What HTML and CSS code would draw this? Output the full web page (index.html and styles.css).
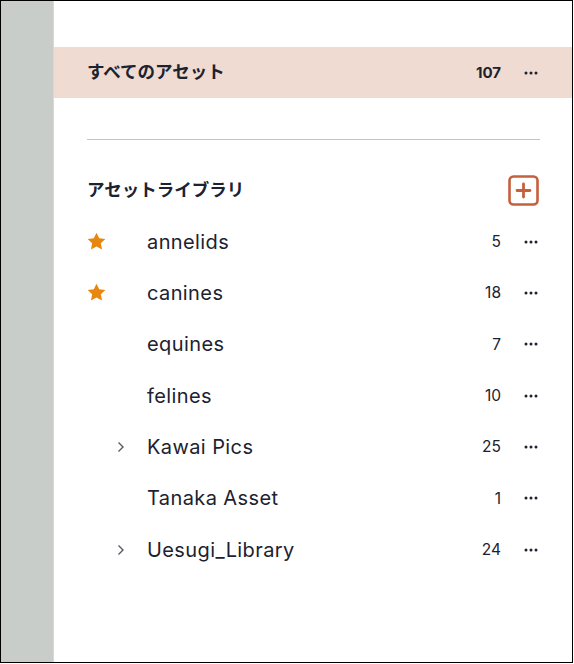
FILE: index.html
```html
<!DOCTYPE html>
<html lang="ja">
<head>
  <meta charset="UTF-8">
  <meta name="viewport" content="width=device-width, initial-scale=1.0">
  <title>アセット</title>
  <link rel="stylesheet" href="styles.css">
</head>
<body>
  <div class="frame">
    <div class="rail"></div>

    <div class="panel">
      <div class="all-row">
        <span class="all-name">すべてのアセット</span>
        <span class="all-count">107</span>
        <span class="dots"><svg width="14" height="4" viewBox="0 0 14 4"><circle cx="2" cy="2" r="1.5"/><circle cx="7" cy="2" r="1.5"/><circle cx="12" cy="2" r="1.5"/></svg></span>
      </div>

      <hr class="divider">

      <div class="section-head">
        <span class="section-title">アセットライブラリ</span>
        <button class="add-btn" aria-label="追加">
          <svg width="31" height="31" viewBox="0 0 31 31"><rect x="1.5" y="1.5" width="28" height="28" rx="4" fill="none" stroke="#c5603d" stroke-width="2.6"/><path d="M15.5 9v13M9 15.5h13" stroke="#c5603d" stroke-width="2.8" stroke-linecap="round"/></svg>
        </button>
      </div>

      <ul class="libs">
        <li class="lib">
          <span class="lead"><svg class="star" width="19" height="19" viewBox="0 0 24 24"><path d="M12 0.8l3.4 7.1 7.8 1-5.7 5.4 1.5 7.7L12 18.2l-7 3.8 1.5-7.7-5.7-5.4 7.8-1z"/></svg></span>
          <span class="name">annelids</span>
          <span class="count">5</span>
          <span class="dots"><svg width="14" height="4" viewBox="0 0 14 4"><circle cx="2" cy="2" r="1.5"/><circle cx="7" cy="2" r="1.5"/><circle cx="12" cy="2" r="1.5"/></svg></span>
        </li>
        <li class="lib">
          <span class="lead"><svg class="star" width="19" height="19" viewBox="0 0 24 24"><path d="M12 0.8l3.4 7.1 7.8 1-5.7 5.4 1.5 7.7L12 18.2l-7 3.8 1.5-7.7-5.7-5.4 7.8-1z"/></svg></span>
          <span class="name">canines</span>
          <span class="count">18</span>
          <span class="dots"><svg width="14" height="4" viewBox="0 0 14 4"><circle cx="2" cy="2" r="1.5"/><circle cx="7" cy="2" r="1.5"/><circle cx="12" cy="2" r="1.5"/></svg></span>
        </li>
        <li class="lib">
          <span class="lead"></span>
          <span class="name">equines</span>
          <span class="count">7</span>
          <span class="dots"><svg width="14" height="4" viewBox="0 0 14 4"><circle cx="2" cy="2" r="1.5"/><circle cx="7" cy="2" r="1.5"/><circle cx="12" cy="2" r="1.5"/></svg></span>
        </li>
        <li class="lib">
          <span class="lead"></span>
          <span class="name">felines</span>
          <span class="count">10</span>
          <span class="dots"><svg width="14" height="4" viewBox="0 0 14 4"><circle cx="2" cy="2" r="1.5"/><circle cx="7" cy="2" r="1.5"/><circle cx="12" cy="2" r="1.5"/></svg></span>
        </li>
        <li class="lib">
          <span class="lead"><svg class="chevron" width="8" height="12" viewBox="0 0 8 12"><path d="M1.5 1.5l4.5 4.5-4.5 4.5"/></svg></span>
          <span class="name">Kawai Pics</span>
          <span class="count">25</span>
          <span class="dots"><svg width="14" height="4" viewBox="0 0 14 4"><circle cx="2" cy="2" r="1.5"/><circle cx="7" cy="2" r="1.5"/><circle cx="12" cy="2" r="1.5"/></svg></span>
        </li>
        <li class="lib">
          <span class="lead"></span>
          <span class="name">Tanaka Asset</span>
          <span class="count">1</span>
          <span class="dots"><svg width="14" height="4" viewBox="0 0 14 4"><circle cx="2" cy="2" r="1.5"/><circle cx="7" cy="2" r="1.5"/><circle cx="12" cy="2" r="1.5"/></svg></span>
        </li>
        <li class="lib">
          <span class="lead"><svg class="chevron" width="8" height="12" viewBox="0 0 8 12"><path d="M1.5 1.5l4.5 4.5-4.5 4.5"/></svg></span>
          <span class="name">Uesugi_Library</span>
          <span class="count">24</span>
          <span class="dots"><svg width="14" height="4" viewBox="0 0 14 4"><circle cx="2" cy="2" r="1.5"/><circle cx="7" cy="2" r="1.5"/><circle cx="12" cy="2" r="1.5"/></svg></span>
        </li>
      </ul>
    </div>
  </div>
</body>
</html>
```

FILE: styles.css
```css
* {
  margin: 0;
  padding: 0;
  box-sizing: border-box;
}

body {
  background: #fff;
  color: #1c2230;
  font-family: Inter, "Noto Sans CJK JP", sans-serif;
}

.frame {
  display: flex;
  width: 573px;
  height: 663px;
  border: 1px solid #000;
}

.rail {
  width: 53px;
  flex-shrink: 0;
  background: #c9cdc9;
  border-right: 1px solid #d6d9d6;
}

.panel {
  flex: 1;
  padding-top: 46px;
}

.all-row {
  display: flex;
  align-items: center;
  height: 51px;
  padding: 0 34px 0 33px;
  background: #efdbd1;
}

.all-name {
  flex: 1;
  font-family: "Noto Sans CJK JP", sans-serif;
  font-weight: 700;
  font-size: 17.5px;
  line-height: 1;
  margin-top: -3px;
}

.all-count {
  font-weight: 700;
  font-size: 15px;
}

.dots {
  display: flex;
  margin-left: 23px;
  fill: #1c2230;
}

.divider {
  border: none;
  border-top: 1px solid #c4c4c4;
  margin: 41px 32px 0 33px;
}

.section-head {
  display: flex;
  align-items: center;
  justify-content: space-between;
  margin-top: 35px;
  padding: 0 33px;
}

.section-title {
  font-family: "Noto Sans CJK JP", sans-serif;
  font-weight: 700;
  font-size: 17.5px;
  line-height: 1;
  margin-top: -3px;
}

.add-btn {
  display: flex;
  border: none;
  background: none;
}

.libs {
  list-style: none;
  margin-top: 10px;
}

.lib {
  display: flex;
  align-items: center;
  height: 51.33px;
  padding: 0 34px 0 33px;
}

.lead {
  display: flex;
  align-items: center;
  width: 60px;
  flex-shrink: 0;
}

.star {
  fill: #e8870f;
}

.chevron {
  margin-left: 30px;
  fill: none;
  stroke: #555a63;
  stroke-width: 1.4;
}

.name {
  flex: 1;
  font-size: 20px;
  letter-spacing: 0.4px;
}

.count {
  font-size: 15.5px;
}
```
